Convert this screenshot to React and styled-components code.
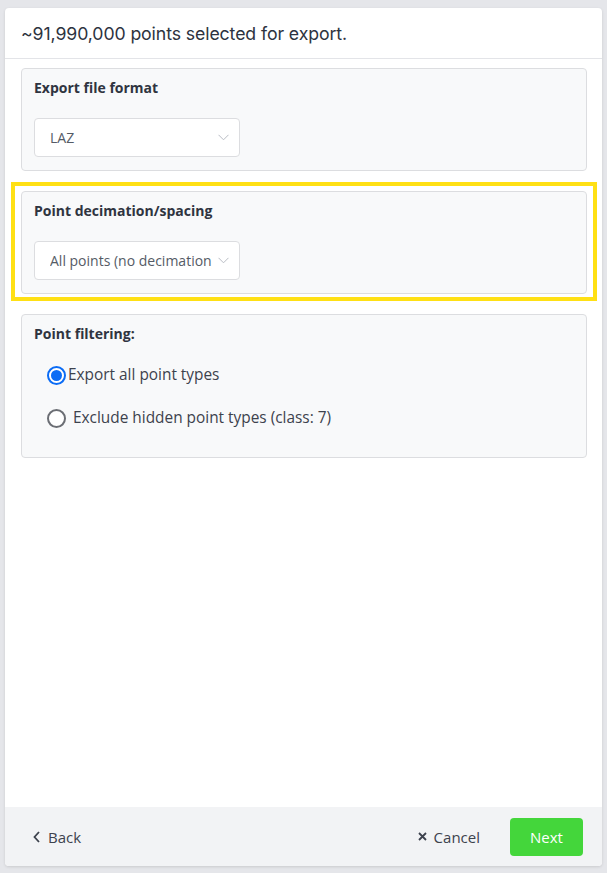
import React, { useState } from "react";
import styled, { createGlobalStyle } from "styled-components";

const GlobalStyle = createGlobalStyle`
  html, body {
    margin: 0;
    height: 100%;
    background: #e5e6ea;
  }
  #root {
    height: 100%;
  }
  * { box-sizing: border-box; }
`;

const Page = styled.div`
  height: 100%;
  padding: 8px 5px 7px 5px;
  font-family: "Open Sans", "Noto Sans", sans-serif;
`;

const Card = styled.div`
  height: 100%;
  background: #fff;
  border-radius: 4px;
  display: flex;
  flex-direction: column;
  overflow: hidden;
  box-shadow: 0 1px 3px rgba(0, 0, 0, 0.12);
`;

const Header = styled.div`
  height: 51px;
  padding: 0 16px;
  display: flex;
  align-items: center;
  border-bottom: 1px solid #e3e4e8;
  font-family: "Inter", "Noto Sans", sans-serif;
  font-size: 17.7px;
  color: #2d3340;
  letter-spacing: -0.1px;
`;

const Body = styled.div`
  flex: 1;
  padding: 9px 15px 9px 16px;
  display: flex;
  flex-direction: column;
  gap: 21px;
`;

const Highlight = styled.div`
  margin: -10px -10px -8px;
  padding: 5px 6px 3px;
  border: 4px solid #ffe014;
`;

const Panel = styled.div`
  background: #f8f9fa;
  border: 1px solid #dcdde0;
  border-radius: 4px;
  padding: 9px 12px ${(p) => p.$bottom || 13}px;
`;

const PanelTitle = styled.div`
  font-size: 14px;
  font-weight: 700;
  color: #2f3440;
  line-height: 20px;
  margin-bottom: ${(p) => p.$gap || 20}px;
`;

const Select = styled.div`
  width: 206px;
  height: 39px;
  background: #fff;
  border: 1px solid #dcdde0;
  border-radius: 4px;
  display: flex;
  align-items: center;
  justify-content: space-between;
  padding: 0 10px 0 15px;
  font-size: 14px;
  color: #555b66;
  white-space: nowrap;
  overflow: hidden;
`;

const SelectText = styled.span`
  overflow: hidden;
  flex: 1;
`;

const Chevron = () => (
  <svg width="11" height="7" viewBox="0 0 11 7" style={{ flexShrink: 0, marginLeft: 6 }}>
    <path d="M0.5 0.8 L5.5 5.8 L10.5 0.8" fill="none" stroke="#b8bcc4" strokeWidth="1" />
  </svg>
);

const RadioList = styled.div`
  display: flex;
  flex-direction: column;
  gap: 23px;
  padding-left: 13px;
`;

const RadioRow = styled.label`
  display: flex;
  align-items: center;
  font-size: 15.4px;
  color: #3d424d;
  line-height: 20px;
  cursor: pointer;
`;

const RadioDot = styled.span`
  width: 19px;
  height: 19px;
  border-radius: 50%;
  flex-shrink: 0;
  border: 2px solid ${(p) => (p.$checked ? "#0b6cf5" : "#6b6e74")};
  background: #fff;
  display: flex;
  align-items: center;
  justify-content: center;
  margin-right: ${(p) => (p.$checked ? 2 : 7)}px;

  &::after {
    content: "";
    width: 11px;
    height: 11px;
    border-radius: 50%;
    background: ${(p) => (p.$checked ? "#0b6cf5" : "transparent")};
  }
`;

const Footer = styled.div`
  height: 59px;
  background: #f2f3f5;
  display: flex;
  align-items: center;
  padding: 0 19px 0 22px;
`;

const TextButton = styled.button`
  border: none;
  background: none;
  font-family: inherit;
  font-size: 15px;
  color: #3d424d;
  display: flex;
  align-items: center;
  gap: ${(p) => p.$gap || 7}px;
  padding: 0 6px;
  cursor: pointer;
`;

const Spacer = styled.div`
  flex: 1;
`;

const NextButton = styled.button`
  width: 73px;
  height: 38px;
  margin-left: 24px;
  border: none;
  border-radius: 4px;
  background: #44d63b;
  color: #fff;
  font-family: inherit;
  font-size: 15px;
  cursor: pointer;
`;

const BackIcon = () => (
  <svg width="8" height="12" viewBox="0 0 8 12">
    <path d="M6 1 L1.5 6 L6 11" fill="none" stroke="#3d424d" strokeWidth="1.8" />
  </svg>
);

const CloseIcon = () => (
  <svg width="9" height="9" viewBox="0 0 9 9">
    <path d="M1 1 L8 8 M8 1 L1 8" fill="none" stroke="#3d424d" strokeWidth="1.8" />
  </svg>
);

const options = [
  { id: "all", label: "Export all point types" },
  { id: "exclude", label: "Exclude hidden point types (class: 7)" },
];

export default function App() {
  const [filter, setFilter] = useState("all");

  return (
    <Page>
      <GlobalStyle />
      <Card>
        <Header>~91,990,000 points selected for export.</Header>
        <Body>
          <Panel>
            <PanelTitle>Export file format</PanelTitle>
            <Select>
              <SelectText>LAZ</SelectText>
              <Chevron />
            </Select>
          </Panel>
          <Highlight>
            <Panel>
              <PanelTitle>Point decimation/spacing</PanelTitle>
              <Select>
                <SelectText>All points (no decimation)</SelectText>
                <Chevron />
              </Select>
            </Panel>
          </Highlight>
          <Panel $bottom={29}>
            <PanelTitle $gap={21}>Point filtering:</PanelTitle>
            <RadioList>
              {options.map((o) => (
                <RadioRow key={o.id} onClick={() => setFilter(o.id)}>
                  <RadioDot $checked={filter === o.id} />
                  {o.label}
                </RadioRow>
              ))}
            </RadioList>
          </Panel>
        </Body>
        <Footer>
          <TextButton>
            <BackIcon />
            Back
          </TextButton>
          <Spacer />
          <TextButton>
            <CloseIcon />
            Cancel
          </TextButton>
          <NextButton>Next</NextButton>
        </Footer>
      </Card>
    </Page>
  );
}
